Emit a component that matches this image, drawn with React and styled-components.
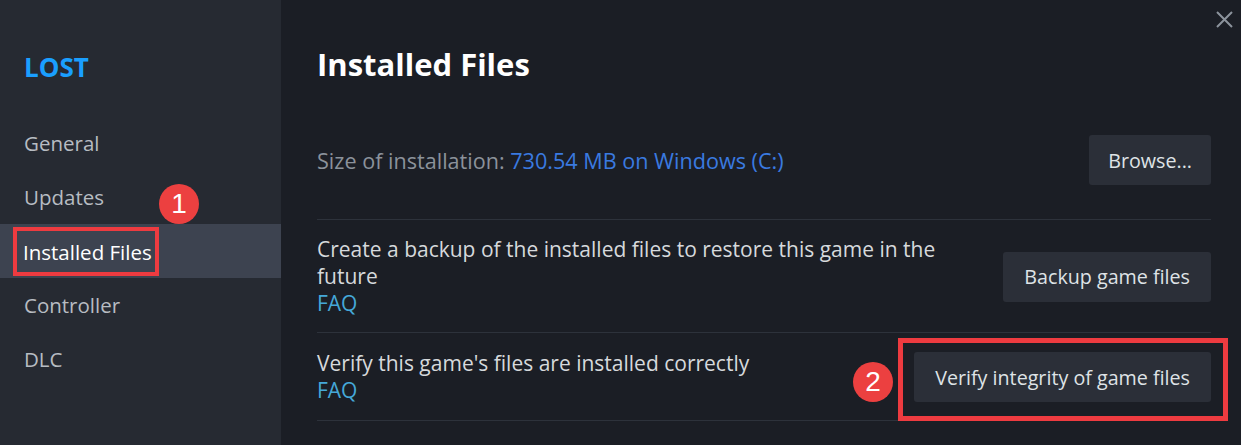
import React from 'react';
import styled, { createGlobalStyle } from 'styled-components';

const GlobalStyle = createGlobalStyle`
  html, body {
    margin: 0;
    padding: 0;
    background: #1b1e25;
  }
  * { box-sizing: border-box; }
`;

const Window = styled.div`
  position: relative;
  display: flex;
  width: 1241px;
  height: 445px;
  overflow: hidden;
  font-family: "Open Sans", "Noto Sans", sans-serif;
  background: #1b1e25;
`;

const Sidebar = styled.nav`
  width: 281px;
  flex-shrink: 0;
  background: #262a32;
  display: flex;
  flex-direction: column;
  padding-top: 49px;
`;

const GameTitle = styled.div`
  padding-left: 24px;
  font-size: 26px;
  font-weight: 700;
  color: #1a9fff;
  line-height: 36px;
  margin-bottom: 31px;
`;

const NavItem = styled.div`
  height: 54px;
  display: flex;
  align-items: center;
  padding-left: 24px;
  font-size: 20.5px;
  color: ${p => (p.$active ? '#ffffff' : '#b7bcc2')};
  background: ${p => (p.$active ? '#3d4350' : 'transparent')};
`;

const Highlight = styled.span`
  display: inline-flex;
  align-items: center;
  height: 49px;
  margin: 1px 0 0 -11px;
  padding: 0 3px 0 6px;
  border: 4px solid #ee3b40;
`;

const Badge = styled.div`
  position: absolute;
  width: 40px;
  height: 40px;
  border-radius: 50%;
  background: #ec4040;
  color: #fff;
  font-size: 28px;
  font-family: "Liberation Sans", Arial, sans-serif;
  display: flex;
  align-items: center;
  justify-content: center;
  left: ${p => p.$x}px;
  top: ${p => p.$y}px;
  z-index: 2;
`;

const Main = styled.main`
  flex: 1;
  padding: 43px 30px 0 36px;
  display: flex;
  flex-direction: column;
`;

const Heading = styled.h1`
  margin: 0 0 50px;
  font-size: 31px;
  font-weight: 700;
  color: #ffffff;
  line-height: 42px;
`;

const Row = styled.div`
  display: flex;
  align-items: center;
  justify-content: space-between;
  gap: 24px;
  padding: ${p => p.$pad || '16px 0'};
  border-top: ${p => (p.$first ? 'none' : '1px solid #2d323b')};
`;

const LastRule = styled.div`
  border-top: 1px solid #2d323b;
`;

const Text = styled.div`
  font-size: ${p => p.$size || 21}px;
  line-height: 27px;
  color: #d6d9dc;
  max-width: 640px;
`;

const Muted = styled.span`
  color: #8b929b;
`;

const Value = styled.span`
  color: #3a7ae0;
`;

const Faq = styled.div`
  color: #45a8d8;
`;

const ButtonWrap = styled.div`
  position: relative;
`;

const Button = styled.button`
  height: 50px;
  padding: 0 ${p => p.$padX || 21}px;
  border: none;
  border-radius: 3px;
  background: #2b2f38;
  color: #dfe3e6;
  font-family: inherit;
  font-size: 19.7px;
  cursor: pointer;
`;

const Frame = styled.div`
  position: absolute;
  left: -16px;
  right: -17px;
  top: -14px;
  bottom: -19px;
  border: 5px solid #ee3b40;
  pointer-events: none;
`;

const Close = styled.svg`
  position: absolute;
  top: 11px;
  right: 8px;
`;

export default function App() {
  return (
    <Window>
      <GlobalStyle />
      <Sidebar>
        <GameTitle>LOST</GameTitle>
        <NavItem>General</NavItem>
        <NavItem>Updates</NavItem>
        <NavItem $active>
          <Highlight>Installed Files</Highlight>
        </NavItem>
        <NavItem>Controller</NavItem>
        <NavItem>DLC</NavItem>
      </Sidebar>
      <Badge $x={159} $y={184}>1</Badge>
      <Main>
        <Heading>Installed Files</Heading>
        <Row $first $pad="0 0 34px">
          <Text $size={21.6}>
            <Muted>Size of installation: </Muted>
            <Value>730.54 MB on Windows (C:)</Value>
          </Text>
          <Button $padX={19}>Browse...</Button>
        </Row>
        <Row $pad="16px 0 15px">
          <Text>
            Create a backup of the installed files to restore this game in the future
            <Faq>FAQ</Faq>
          </Text>
          <Button>Backup game files</Button>
        </Row>
        <Row $pad="17px 0 16px">
          <Text>
            Verify this game's files are installed correctly
            <Faq>FAQ</Faq>
          </Text>
          <ButtonWrap>
            <Badge $x={-61} $y={10}>2</Badge>
            <Button>Verify integrity of game files</Button>
            <Frame />
          </ButtonWrap>
        </Row>
        <LastRule />
      </Main>
      <Close width="17" height="17" viewBox="0 0 17 17">
        <path d="M1 1 L16 16 M16 1 L1 16" stroke="#8c939c" strokeWidth="2" />
      </Close>
    </Window>
  );
}
